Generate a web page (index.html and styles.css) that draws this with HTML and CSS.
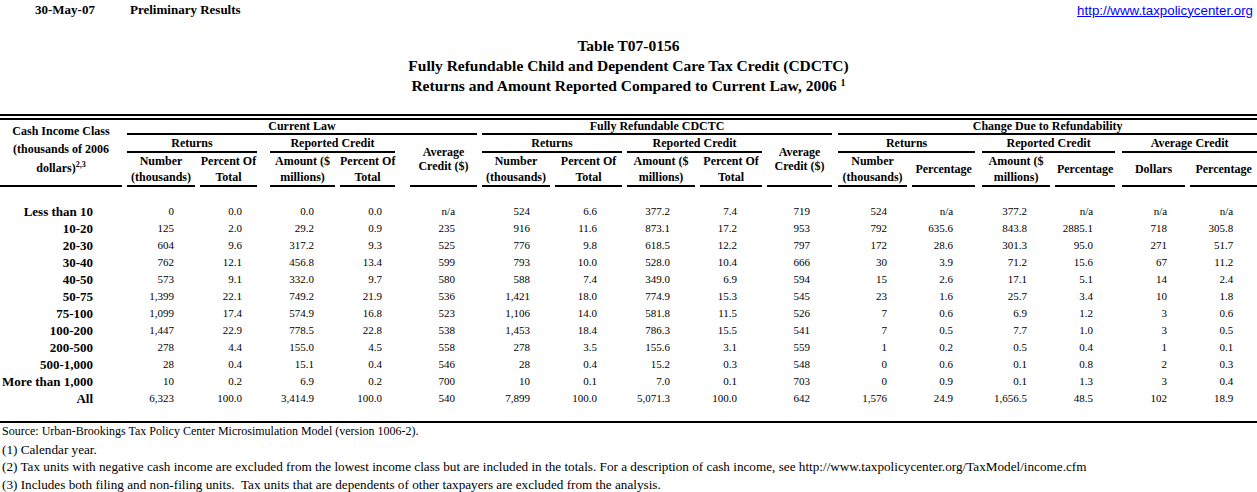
FILE: index.html
```html
<!DOCTYPE html>
<html lang="en">
<head>
<meta charset="utf-8">
<title>Table T07-0156</title>
<link rel="stylesheet" href="styles.css">
</head>
<body>
<div class="topbar">
  <span class="date">30-May-07</span>
  <span class="prelim">Preliminary Results</span>
  <a class="site" href="#">http://www.taxpolicycenter.org</a>
</div>
<div class="titles">
  <div>Table T07-0156</div>
  <div>Fully Refundable Child and Dependent Care Tax Credit (CDCTC)</div>
  <div>Returns and Amount Reported Compared to Current Law, 2006 <sup>1</sup></div>
</div>
<div class="double-rule"></div>
<table class="report">
  <colgroup>
    <col class="c0"><col class="c1"><col class="c2"><col class="c3"><col class="c4"><col class="c5">
    <col class="c6"><col class="c7"><col class="c8"><col class="c9"><col class="c10">
    <col class="c11"><col class="c12"><col class="c13"><col class="c14"><col class="c15"><col class="c16">
  </colgroup>
  <thead>
    <tr class="r1">
      <th rowspan="3" class="ul cls">Cash Income Class<br>(thousands of 2006<br>dollars)<sup>2,3</sup></th>
      <th colspan="5" class="ul">Current Law</th>
      <th colspan="5" class="ul g6">Fully Refundable CDCTC</th>
      <th colspan="6" class="ul g0">Change Due to Refundability</th>
    </tr>
    <tr class="r2">
      <th colspan="2" class="ul g13">Returns</th>
      <th colspan="2" class="ul g15">Reported Credit</th>
      <th rowspan="2" class="ul avg">Average<br>Credit ($)</th>
      <th colspan="2" class="ul">Returns</th>
      <th colspan="2" class="ul">Reported Credit</th>
      <th rowspan="2" class="ul avg g6">Average<br>Credit ($)</th>
      <th colspan="2" class="ul g7">Returns</th>
      <th colspan="2" class="ul g7">Reported Credit</th>
      <th colspan="2" class="ul g0">Average Credit</th>
    </tr>
    <tr class="r3">
      <th class="ul">Number<br>(thousands)</th>
      <th class="ul g13">Percent Of<br>Total</th>
      <th class="ul">Amount ($<br>millions)</th>
      <th class="ul g15">Percent Of<br>Total</th>
      <th class="ul">Number<br>(thousands)</th>
      <th class="ul">Percent Of<br>Total</th>
      <th class="ul">Amount ($<br>millions)</th>
      <th class="ul">Percent Of<br>Total</th>
      <th class="ul">Number<br>(thousands)</th>
      <th class="ul g7">Percentage</th>
      <th class="ul">Amount ($<br>millions)</th>
      <th class="ul g7">Percentage</th>
      <th class="ul">Dollars</th>
      <th class="ul g0">Percentage</th>
    </tr>
  </thead>
  <tbody>
    <tr class="spacer"><td colspan="17"></td></tr>
    <tr><td>Less than 10</td><td>0</td><td>0.0</td><td>0.0</td><td>0.0</td><td>n/a</td><td>524</td><td>6.6</td><td>377.2</td><td>7.4</td><td>719</td><td>524</td><td>n/a</td><td>377.2</td><td>n/a</td><td>n/a</td><td>n/a</td></tr>
    <tr><td>10-20</td><td>125</td><td>2.0</td><td>29.2</td><td>0.9</td><td>235</td><td>916</td><td>11.6</td><td>873.1</td><td>17.2</td><td>953</td><td>792</td><td>635.6</td><td>843.8</td><td>2885.1</td><td>718</td><td>305.8</td></tr>
    <tr><td>20-30</td><td>604</td><td>9.6</td><td>317.2</td><td>9.3</td><td>525</td><td>776</td><td>9.8</td><td>618.5</td><td>12.2</td><td>797</td><td>172</td><td>28.6</td><td>301.3</td><td>95.0</td><td>271</td><td>51.7</td></tr>
    <tr><td>30-40</td><td>762</td><td>12.1</td><td>456.8</td><td>13.4</td><td>599</td><td>793</td><td>10.0</td><td>528.0</td><td>10.4</td><td>666</td><td>30</td><td>3.9</td><td>71.2</td><td>15.6</td><td>67</td><td>11.2</td></tr>
    <tr><td>40-50</td><td>573</td><td>9.1</td><td>332.0</td><td>9.7</td><td>580</td><td>588</td><td>7.4</td><td>349.0</td><td>6.9</td><td>594</td><td>15</td><td>2.6</td><td>17.1</td><td>5.1</td><td>14</td><td>2.4</td></tr>
    <tr><td>50-75</td><td>1,399</td><td>22.1</td><td>749.2</td><td>21.9</td><td>536</td><td>1,421</td><td>18.0</td><td>774.9</td><td>15.3</td><td>545</td><td>23</td><td>1.6</td><td>25.7</td><td>3.4</td><td>10</td><td>1.8</td></tr>
    <tr><td>75-100</td><td>1,099</td><td>17.4</td><td>574.9</td><td>16.8</td><td>523</td><td>1,106</td><td>14.0</td><td>581.8</td><td>11.5</td><td>526</td><td>7</td><td>0.6</td><td>6.9</td><td>1.2</td><td>3</td><td>0.6</td></tr>
    <tr><td>100-200</td><td>1,447</td><td>22.9</td><td>778.5</td><td>22.8</td><td>538</td><td>1,453</td><td>18.4</td><td>786.3</td><td>15.5</td><td>541</td><td>7</td><td>0.5</td><td>7.7</td><td>1.0</td><td>3</td><td>0.5</td></tr>
    <tr><td>200-500</td><td>278</td><td>4.4</td><td>155.0</td><td>4.5</td><td>558</td><td>278</td><td>3.5</td><td>155.6</td><td>3.1</td><td>559</td><td>1</td><td>0.2</td><td>0.5</td><td>0.4</td><td>1</td><td>0.1</td></tr>
    <tr><td>500-1,000</td><td>28</td><td>0.4</td><td>15.1</td><td>0.4</td><td>546</td><td>28</td><td>0.4</td><td>15.2</td><td>0.3</td><td>548</td><td>0</td><td>0.6</td><td>0.1</td><td>0.8</td><td>2</td><td>0.3</td></tr>
    <tr><td>More than 1,000</td><td>10</td><td>0.2</td><td>6.9</td><td>0.2</td><td>700</td><td>10</td><td>0.1</td><td>7.0</td><td>0.1</td><td>703</td><td>0</td><td>0.9</td><td>0.1</td><td>1.3</td><td>3</td><td>0.4</td></tr>
    <tr><td>All</td><td>6,323</td><td>100.0</td><td>3,414.9</td><td>100.0</td><td>540</td><td>7,899</td><td>100.0</td><td>5,071.3</td><td>100.0</td><td>642</td><td>1,576</td><td>24.9</td><td>1,656.5</td><td>48.5</td><td>102</td><td>18.9</td></tr>
  </tbody>
</table>
<div class="bottom-rule"></div>
<div class="notes">
  <div class="source">Source: Urban-Brookings Tax Policy Center Microsimulation Model (version 1006-2).</div>
  <div>(1) Calendar year.</div>
  <div>(2) Tax units with negative cash income are excluded from the lowest income class but are included in the totals. For a description of cash income, see http://www.taxpolicycenter.org/TaxModel/income.cfm</div>
  <div>(3) Includes both filing and non-filing units.&nbsp; Tax units that are dependents of other taxpayers are excluded from the analysis.</div>
</div>
</body>
</html>
```

FILE: styles.css
```css
* { box-sizing: border-box; }
html, body { background: #fff; }
body {
  margin: 0;
  color: #000;
  font-family: "Liberation Serif", "Times New Roman", serif;
}

/* top bar */
.topbar {
  display: flex;
  align-items: center;
  height: 20px;
  padding-left: 35px;
  font-weight: bold;
  font-size: 13px;
}
.topbar .date { width: 95px; }
.topbar .prelim { flex: 1; }
.topbar .site {
  font-family: "Liberation Sans", Arial, sans-serif;
  font-weight: normal;
  font-size: 13.3px;
  color: #0000ff;
  text-decoration: underline;
  margin-right: 4px;
}

/* titles */
.titles {
  margin-top: 16px;
  text-align: center;
  font-weight: bold;
  font-size: 15.5px;
  line-height: 20px;
}
.titles sup {
  font-size: 10px;
  line-height: 0;
  vertical-align: 5px;
}

.double-rule {
  margin-top: 18px;
  border-top: 6px double #000;
}

/* table */
.report {
  width: 1257px;
  table-layout: fixed;
  border-collapse: collapse;
  border-spacing: 0;
}
.c0 { width: 127px; }
.c1 { width: 73px; }
.c2 { width: 70px; }
.c3 { width: 70px; }
.c4 { width: 70px; }
.c5 { width: 72px; }
.c6 { width: 73px; }
.c7 { width: 72px; }
.c8 { width: 73px; }
.c9 { width: 67px; }
.c10 { width: 71px; }
.c11 { width: 74px; }
.c12 { width: 70px; }
.c13 { width: 73px; }
.c14 { width: 67px; }
.c15 { width: 68px; }
.c16 { width: 67px; }

.report th {
  font-weight: bold;
  font-size: 12px;
  padding: 0;
  text-align: center;
  vertical-align: middle;
  white-space: nowrap;
}
.report th sup {
  font-size: 8px;
  line-height: 0;
  vertical-align: 5px;
}

/* underline with a gap at the right end */
.ul {
  --gap: 5px;
  padding-right: var(--gap) !important;
  background-image: linear-gradient(#000, #000);
  background-repeat: no-repeat;
  background-position: left bottom;
  background-size: calc(100% - var(--gap)) 2px;
}
.g0 { --gap: 0px; }
.g6 { --gap: 6px; }
.g7 { --gap: 7px; }
.g13 { --gap: 13px; }
.g15 { --gap: 15px; }

.report .r1 th { height: 15px; line-height: 13px; padding-bottom: 2px; }
.report .r2 th { height: 18px; line-height: 16px; padding-bottom: 2px; }
.report .r3 th { height: 34px; line-height: 16px; padding-bottom: 2px; }
.report th.cls { line-height: 18.5px; padding-bottom: 8px; }
.report th.avg { line-height: 14px; padding-bottom: 4px; }

.report .spacer td { height: 16px; padding: 0; }

.report tbody td {
  font-size: 11px;
  height: 17px;
  line-height: 17px;
  padding: 0;
  text-align: right;
  white-space: nowrap;
}
.report tbody td:nth-child(1) { font-weight: bold; font-size: 13px; padding-right: 34px; }
.report tbody td:nth-child(2) { padding-right: 26px; }
.report tbody td:nth-child(3) { padding-right: 28px; }
.report tbody td:nth-child(4) { padding-right: 26px; }
.report tbody td:nth-child(5) { padding-right: 28px; }
.report tbody td:nth-child(6) { padding-right: 27px; }
.report tbody td:nth-child(7) { padding-right: 25px; }
.report tbody td:nth-child(8) { padding-right: 30px; }
.report tbody td:nth-child(9) { padding-right: 30px; }
.report tbody td:nth-child(10) { padding-right: 30px; }
.report tbody td:nth-child(11) { padding-right: 28px; }
.report tbody td:nth-child(12) { padding-right: 25px; }
.report tbody td:nth-child(13) { padding-right: 29px; }
.report tbody td:nth-child(14) { padding-right: 28px; }
.report tbody td:nth-child(15) { padding-right: 29px; }
.report tbody td:nth-child(16) { padding-right: 23px; }
.report tbody td:nth-child(17) { padding-right: 24px; }

.bottom-rule {
  margin-top: 14px;
  border-top: 2px solid #000;
}

.notes {
  padding-left: 2px;
  font-size: 13.2px;
  line-height: 17.5px;
  white-space: nowrap;
}
.notes .source { font-size: 12px; }
```
